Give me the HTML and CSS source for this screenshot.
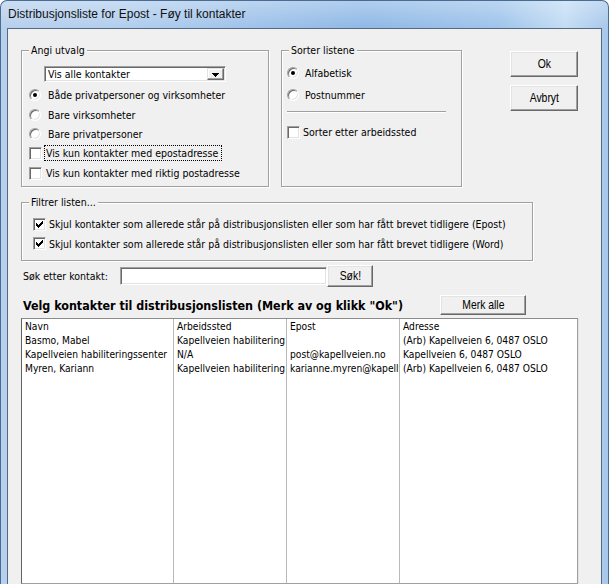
FILE: index.html
```html
<!DOCTYPE html>
<html lang="no">
<head>
<meta charset="utf-8">
<title>Distribusjonsliste for Epost - Føy til kontakter</title>
<link rel="stylesheet" href="styles.css">
</head>
<body>
<div class="window">
  <div class="titlebar">Distribusjonsliste for Epost - Føy til kontakter</div>
  <div class="client">
    <div class="top-row">
      <fieldset class="group group-select">
        <legend>Angi utvalg</legend>
        <div class="combo">
          <span class="combo-text">Vis alle kontakter</span>
          <span class="combo-btn"><svg width="7" height="4" viewBox="0 0 7 4"><path d="M0 0h7v1H0zM1 1h5v1H1zM2 2h3v1H2zM3 3h1v1H3z" fill="#000"/></svg></span>
        </div>
        <div class="options">
          <div class="opt h20"><span class="radio checked"></span><span>Både privatpersoner og virksomheter</span></div>
          <div class="opt h19"><span class="radio"></span><span>Bare virksomheter</span></div>
          <div class="opt h19"><span class="radio"></span><span>Bare privatpersoner</span></div>
          <div class="opt h20"><span class="check"></span><span class="focus">Vis kun kontakter med epostadresse</span></div>
          <div class="opt h20"><span class="check"></span><span class="cb-text">Vis kun kontakter med riktig postadresse</span></div>
        </div>
      </fieldset>
      <fieldset class="group group-sort">
        <legend>Sorter listene</legend>
        <div class="opt sort-first"><span class="radio checked"></span><span>Alfabetisk</span></div>
        <div class="opt h22"><span class="radio"></span><span>Postnummer</span></div>
        <div class="sep"></div>
        <div class="opt sort-check"><span class="check"></span><span>Sorter etter arbeidssted</span></div>
      </fieldset>
      <div class="actions">
        <button class="btn btn-main"><span class="btn-label">Ok</span></button>
        <button class="btn btn-main"><span class="btn-label">Avbryt</span></button>
      </div>
    </div>

    <fieldset class="group group-filter">
      <legend>Filtrer listen...</legend>
      <div class="filter-opts">
        <div class="opt h20"><span class="check"><svg width="7" height="7" viewBox="0 0 7 7"><path d="M6 0h1v1H6zM5 1h2v1H5zM0 2h1v1H0zM4 2h3v1H4zM0 3h2v1H0zM3 3h3v1H3zM0 4h5v1H0zM1 5h3v1H1zM2 6h1v1H2z" fill="#000"/></svg></span><span>Skjul kontakter som allerede står på distribusjonslisten eller som har fått brevet tidligere (Epost)</span></div>
        <div class="opt h19"><span class="check"><svg width="7" height="7" viewBox="0 0 7 7"><path d="M6 0h1v1H6zM5 1h2v1H5zM0 2h1v1H0zM4 2h3v1H4zM0 3h2v1H0zM3 3h3v1H3zM0 4h5v1H0zM1 5h3v1H1zM2 6h1v1H2z" fill="#000"/></svg></span><span>Skjul kontakter som allerede står på distribusjonslisten eller som har fått brevet tidligere (Word)</span></div>
      </div>
    </fieldset>

    <div class="search">
      <span class="search-label">Søk etter kontakt:</span>
      <span class="field"></span>
      <button class="btn btn-search"><span class="btn-label">Søk!</span></button>
    </div>

    <div class="pick">
      <span class="pick-title">Velg kontakter til distribusjonslisten (Merk av og klikk "Ok")</span>
      <button class="btn btn-all"><span class="btn-label">Merk alle</span></button>
    </div>

    <div class="list">
      <div class="col c1">
        <div class="cell head">Navn</div>
        <div class="cell">Basmo, Mabel</div>
        <div class="cell">Kapellveien habiliteringssenter</div>
        <div class="cell">Myren, Kariann</div>
      </div>
      <div class="col c2">
        <div class="cell head">Arbeidssted</div>
        <div class="cell">Kapellveien habilitering</div>
        <div class="cell">N/A</div>
        <div class="cell">Kapellveien habilitering</div>
      </div>
      <div class="col c3">
        <div class="cell head">Epost</div>
        <div class="cell"></div>
        <div class="cell">post@kapellveien.no</div>
        <div class="cell">karianne.myren@kapellveien.no</div>
      </div>
      <div class="col c4">
        <div class="cell head">Adresse</div>
        <div class="cell">(Arb) Kapellveien 6, 0487 OSLO</div>
        <div class="cell">Kapellveien 6, 0487 OSLO</div>
        <div class="cell">(Arb) Kapellveien 6, 0487 OSLO</div>
      </div>
    </div>
  </div>
</div>
</body>
</html>
```

FILE: styles.css
```css
* { box-sizing: border-box; }
html, body { margin: 0; padding: 0; }
body {
  width: 609px;
  height: 584px;
  overflow: hidden;
  background: #fff;
  font-family: "DejaVu Sans Condensed", "DejaVu Sans", sans-serif;
  font-size: 10.5px;
  color: #000;
}

.window {
  width: 609px;
  height: 584px;
  display: flex;
  flex-direction: column;
  padding: 0 6px;
  border: 1px solid #4a6b92;
  border-bottom: 0;
  border-radius: 7px 7px 0 0;
  overflow: hidden;
  background:
    linear-gradient(to bottom, rgba(255,255,255,0.30), rgba(255,255,255,0) 27px),
    linear-gradient(to right, #b7d0ed 0%, #b2ceee 20%, #a0c3ea 40%, #8fb8e6 60%, #9fc4eb 82%, #c3dcf4 93%, #a7c8eb 100%);
}

.titlebar {
  height: 27px;
  line-height: 26px;
  padding-left: 1px;
  font-family: "Liberation Sans", Arial, sans-serif;
  font-size: 12px;
  color: #111;
  white-space: nowrap;
}

.client {
  flex: 1;
  min-height: 0;
  display: flex;
  flex-direction: column;
  background: #f0f0f0;
  border: 1px solid #56697f;
  border-bottom: 0;
}

/* group boxes */
.group {
  margin: 0;
  padding: 0;
  min-width: 0;
  border: 1px solid #a0a0a0;
  box-shadow: inset 1px 1px 0 #fff, 1px 1px 0 #fff;
}
.group legend {
  margin-left: 7px;
  padding: 0 2px;
  line-height: 13px;
  background: #f0f0f0;
}

.top-row {
  display: flex;
  align-items: flex-start;
  margin: 15px 0 0 13px;
}
.group-select { width: 248px; height: 143px; }
.group-sort { width: 181px; height: 143px; margin-left: 12px; }

.actions {
  margin-left: 48px;
  padding-top: 7px;
  display: flex;
  flex-direction: column;
  gap: 8px;
}

/* buttons */
.btn {
  margin: 0;
  padding: 0;
  background: #f0f0f0;
  border: 1px solid;
  border-color: #fff #696969 #696969 #fff;
  box-shadow: inset -1px -1px 0 #a0a0a0, inset 1px 1px 0 #e3e3e3;
  color: #000;
  display: flex;
  align-items: center;
  justify-content: center;
  overflow: hidden;
}
.btn-label {
  display: inline-block;
  font-family: "Liberation Sans", Arial, sans-serif;
  font-size: 13px;
  line-height: 14px;
  transform: scaleX(0.8);
  white-space: nowrap;
}
.btn-main { width: 68px; height: 26px; }
.btn-search { width: 46px; height: 22px; }
.btn-all { width: 86px; height: 20px; margin-left: auto; }

/* combo */
.combo {
  display: flex;
  margin: 9px 0 0 22px;
  width: 182px;
  height: 16px;
  padding: 1px;
  background: #fff;
  border: 1px solid;
  border-color: #a0a0a0 #fff #fff #a0a0a0;
  box-shadow: inset 1px 1px 0 #696969, inset -1px -1px 0 #e3e3e3;
}
.combo-text { flex: 1; line-height: 12px; padding-left: 2px; white-space: nowrap; }
.combo-btn {
  width: 17px;
  height: 12px;
  background: #f0f0f0;
  border: 1px solid;
  border-color: #e3e3e3 #696969 #696969 #e3e3e3;
  box-shadow: inset -1px -1px 0 #a0a0a0, inset 1px 1px 0 #fff;
  display: flex;
  align-items: center;
  justify-content: center;
}
.combo-btn svg { display: block; margin-top: 1px; }

/* options */
.options { margin-top: 3px; }
.opt { display: flex; align-items: center; white-space: nowrap; }
.h19 { height: 19px; }
.h20 { height: 20px; }
.h22 { height: 22px; }
.group-select .opt { padding-left: 7px; }

.radio {
  position: relative;
  flex: none;
  width: 12px;
  height: 12px;
  margin-right: 7px;
  border-radius: 50%;
  background: #fff;
  border: 1px solid;
  border-color: #a0a0a0 #fff #fff #a0a0a0;
  box-shadow: inset 1px 1px 0 #696969, inset -1px -1px 0 #e3e3e3;
}
.radio.checked::after {
  content: "";
  position: absolute;
  left: 3px;
  top: 3px;
  width: 4px;
  height: 4px;
  border-radius: 50%;
  background: #000;
}

.check {
  flex: none;
  width: 13px;
  height: 13px;
  margin-right: 2px;
  background: #fff;
  border: 1px solid;
  border-color: #a0a0a0 #fff #fff #a0a0a0;
  box-shadow: inset 1px 1px 0 #696969, inset -1px -1px 0 #e3e3e3;
  display: flex;
  align-items: center;
  justify-content: center;
}
.check svg { display: block; }

.focus {
  border: 1px dotted #000;
  padding: 0 3px 0 1px;
  line-height: 14px;
}
.cb-text { padding-left: 2px; }

.group-sort .opt { padding-left: 5px; }
.group-sort .radio { margin-right: 6px; }
.sort-first { margin-top: 5px; height: 22px; }
.sep {
  margin: 5px 0 0 5px;
  width: 159px;
  height: 2px;
  border-top: 1px solid #a0a0a0;
  border-bottom: 1px solid #fff;
}
.sort-check { margin-top: 9px; height: 20px; }
.sort-check .check { margin-right: 3px; }

/* filter */
.group-filter { margin: 9px 0 0 13px; width: 512px; height: 65px; }
.filter-opts { margin-top: 5px; }
.group-filter .opt { padding-left: 11px; }
.group-filter .check { margin-right: 3px; }

/* search */
.search {
  display: flex;
  align-items: center;
  margin: 4px 0 0 15px;
  height: 22px;
}
.search-label { width: 97px; white-space: nowrap; }
.field {
  width: 207px;
  height: 18px;
  background: #fff;
  border: 1px solid;
  border-color: #a0a0a0 #fff #fff #a0a0a0;
  box-shadow: inset 1px 1px 0 #696969, inset -1px -1px 0 #e3e3e3;
}

/* pick row */
.pick {
  display: flex;
  align-items: center;
  height: 20px;
  margin: 8px 75px 0 15px;
}
.pick-title {
  font-weight: bold;
  font-size: 12.4px;
  white-space: nowrap;
}

/* list */
.list {
  flex: 1;
  min-height: 0;
  display: flex;
  width: 557px;
  margin: 3px 0 0 13px;
  background: #fff;
  border: 1px solid;
  border-color: #8c8c8c #a0a0a0 #a0a0a0 #646464;
  box-shadow: 1px 0 0 #e3e3e3;
  font-size: 10.2px;
}
.col {
  flex: none;
  display: flex;
  flex-direction: column;
  overflow: hidden;
  white-space: nowrap;
  border-right: 1px solid #b9b9b9;
}
.c1 { width: 152px; }
.c2 { width: 113px; }
.c3 { width: 113px; }
.c4 { flex: 1; border-right: 0; }
.cell {
  height: 14px;
  line-height: 14px;
  padding-left: 3px;
  overflow: hidden;
}
.cell.head { height: 15px; padding-top: 1px; }
```
